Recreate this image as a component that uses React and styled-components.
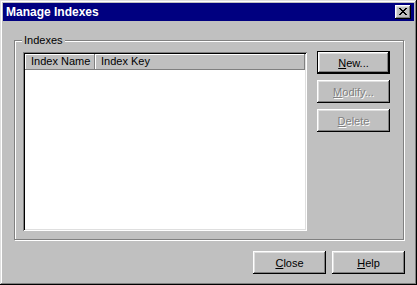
import styled, { createGlobalStyle } from "styled-components";

const GlobalStyle = createGlobalStyle`
  body {
    margin: 0;
    background: #c0c0c0;
    font-family: "Liberation Sans", Arial, sans-serif;
    font-size: 11px;
  }
`;

export default function App() {
  return (
    <>
      <GlobalStyle />
      <Window>
        <TitleBar>
          <Title>Manage Indexes</Title>
          <CloseBox>
            <svg width="8" height="7" viewBox="0 0 8 7">
              <path
                d="M0 0h2v1h1v1h2v-1h1v-1h2v1h-1v1h-1v1h-1v1h1v1h1v1h1v1h-2v-1h-1v-1h-2v1h-1v1h-2v-1h1v-1h1v-1h1v-1h-1v-1h-1v-1h-1z"
                fill="#000"
              />
            </svg>
          </CloseBox>
        </TitleBar>
        <Body>
          <Group>
            <Legend>Indexes</Legend>
            <ListView>
              <Header>
                <HeaderCell $width="70px">Index Name</HeaderCell>
                <HeaderCell $grow>Index Key</HeaderCell>
              </Header>
              <ListBody />
            </ListView>
            <SideButtons>
              <Button $default>
                <u>N</u>ew...
              </Button>
              <Button disabled>
                <u>M</u>odify...
              </Button>
              <Button disabled>
                <u>D</u>elete
              </Button>
            </SideButtons>
          </Group>
          <Footer>
            <Button>
              <u>C</u>lose
            </Button>
            <Button>
              <u>H</u>elp
            </Button>
          </Footer>
        </Body>
      </Window>
    </>
  );
}

const Window = styled.div`
  width: 417px;
  height: 285px;
  box-sizing: border-box;
  padding: 3px;
  background: #c0c0c0;
  box-shadow: inset -1px -1px #000, inset 1px 1px #dfdfdf,
    inset -2px -2px #808080, inset 2px 2px #fff;
  display: flex;
  flex-direction: column;
`;

const TitleBar = styled.div`
  height: 18px;
  background: #000080;
  display: flex;
  align-items: center;
  justify-content: space-between;
  padding: 0 3px 0 3px;
`;

const Title = styled.span`
  color: #fff;
  font-weight: bold;
  font-size: 12px;
  white-space: nowrap;
`;

const CloseBox = styled.div`
  width: 16px;
  height: 14px;
  box-sizing: border-box;
  background: #c0c0c0;
  box-shadow: inset -1px -1px #000, inset 1px 1px #fff,
    inset -2px -2px #808080, inset 2px 2px #dfdfdf;
  display: flex;
  align-items: center;
  justify-content: center;
  padding-bottom: 1px;
`;

const Body = styled.div`
  flex: 1;
  display: flex;
  flex-direction: column;
  padding: 19px 9px 0 11px;
`;

const Group = styled.div`
  position: relative;
  height: 200px;
  box-sizing: border-box;
  border: 1px solid #808080;
  box-shadow: inset 1px 1px #fff, 1px 1px #fff;
  display: flex;
  gap: 10px;
  padding: 11px 8px;
  margin-right: 1px;
`;

const Legend = styled.span`
  position: absolute;
  top: -7px;
  left: 7px;
  padding: 0 2px;
  background: #c0c0c0;
  color: #000;
  line-height: 13px;
`;

const ListView = styled.div`
  width: 284px;
  height: 179px;
  box-sizing: border-box;
  padding: 2px;
  background: #fff;
  box-shadow: inset 1px 1px #808080, inset -1px -1px #fff, inset 2px 2px #000,
    inset -2px -2px #dfdfdf;
  display: flex;
  flex-direction: column;
`;

const Header = styled.div`
  display: flex;
  height: 16px;
`;

const HeaderCell = styled.div`
  width: ${(p) => p.$width || "auto"};
  flex: ${(p) => (p.$grow ? 1 : "none")};
  box-sizing: border-box;
  background: #c0c0c0;
  padding: 0 6px;
  line-height: 15px;
  color: #000;
  white-space: nowrap;
  overflow: hidden;
  box-shadow: inset -1px -1px #808080, inset 1px 1px #fff;
`;

const ListBody = styled.div`
  flex: 1;
  background: #fff;
`;

const SideButtons = styled.div`
  display: flex;
  flex-direction: column;
  gap: 6px;
  margin-top: -1px;
`;

const Button = styled.button`
  width: 73px;
  height: 23px;
  box-sizing: border-box;
  margin: 0;
  padding: 0;
  font-family: "Liberation Sans", Arial, sans-serif;
  font-size: 11px;
  color: #000;
  background: #c0c0c0;
  border: ${(p) => (p.$default ? "1px solid #000" : "none")};
  box-shadow: inset -1px -1px #000, inset 1px 1px #fff,
    inset -2px -2px #808080, inset 2px 2px #dfdfdf;

  &:disabled {
    color: #808080;
    text-shadow: 1px 1px #fff;
  }
`;

const Footer = styled.div`
  display: flex;
  justify-content: flex-end;
  gap: 6px;
  margin-top: 11px;
`;
